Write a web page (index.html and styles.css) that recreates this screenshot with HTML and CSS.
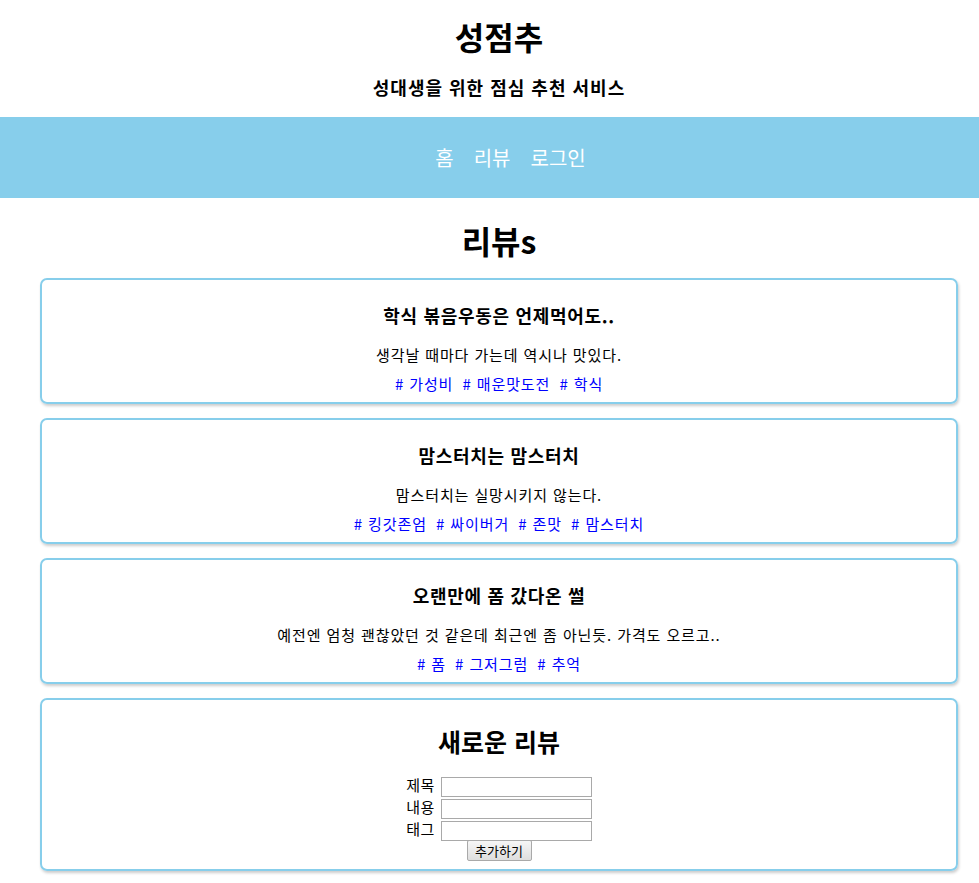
FILE: index.html
```html
<!DOCTYPE html>
<html lang="ko">
<head>
    <meta charset="UTF-8">
    <meta name="viewport" content="width=device-width, initial-scale=1.0">
    <title>성점추</title>
    <link rel="stylesheet" href="styles.css">
</head>
<body>
    <header>
        <h1>성점추</h1>
        <h3>성대생을 위한 점심 추천 서비스</h3>
    </header>
    <nav>
        <ul>
            <li><a href="index.html">홈</a></li>
            <li><a href="review.html">리뷰</a></li>
            <li><a href="login.html">로그인</a></li>
        </ul>
    </nav>
    <main>
        <h1 class="page-title">리뷰s</h1>

        <div class="review">
            <h3>학식 볶음우동은 언제먹어도..</h3>
            <p>생각날 때마다 가는데 역시나 맛있다.</p>
            <div class="tags">
                <span># 가성비</span>
                <span># 매운맛도전</span>
                <span># 학식</span>
            </div>
        </div>

        <div class="review">
            <h3>맘스터치는 맘스터치</h3>
            <p>맘스터치는 실망시키지 않는다.</p>
            <div class="tags">
                <span># 킹갓존엄</span>
                <span># 싸이버거</span>
                <span># 존맛</span>
                <span># 맘스터치</span>
            </div>
        </div>

        <div class="review">
            <h3>오랜만에 폼 갔다온 썰</h3>
            <p>예전엔 엄청 괜찮았던 것 같은데 최근엔 좀 아닌듯. 가격도 오르고..</p>
            <div class="tags">
                <span># 폼</span>
                <span># 그저그럼</span>
                <span># 추억</span>
            </div>
        </div>

        <div class="review new-review">
            <h2>새로운 리뷰</h2>
            <form>
                <div class="form-row">
                    <label for="title">제목</label>
                    <input type="text" id="title">
                </div>
                <div class="form-row">
                    <label for="content">내용</label>
                    <input type="text" id="content">
                </div>
                <div class="form-row">
                    <label for="tag">태그</label>
                    <input type="text" id="tag">
                </div>
                <div class="form-row">
                    <button type="button">추가하기</button>
                </div>
            </form>
        </div>
    </main>
</body>
</html>
```

FILE: styles.css
```css
/* Base */
body {
    font-family: "Noto Sans CJK KR", "Noto Sans", sans-serif;
    margin: 0;
    padding: 0;
    color: #000;
    background-color: #fff;
}

header {
    text-align: center;
    padding: 16px 0 18px 19px;
}

header h1 {
    font-size: 32px;
    line-height: 40px;
    margin: 0;
}

header h3 {
    font-size: 18px;
    letter-spacing: 1px;
    line-height: 24px;
    margin: 19px 0 0;
}

/* Navigation */
nav {
    background-color: #87ceeb;
    height: 81px;
    padding-left: 42px;
    display: flex;
    align-items: center;
    justify-content: center;
}

nav ul {
    list-style-type: none;
    margin: 0;
    padding: 0;
    display: flex;
    gap: 20px;
}

nav ul li a {
    color: #fff;
    text-decoration: none;
    font-size: 20px;
}

/* Reviews */
main {
    padding: 0 21px 20px 40px;
}

.page-title {
    text-align: center;
    font-size: 32px;
    line-height: 40px;
    margin: 22px 0 18px;
}

.review {
    border: 2px solid #87ceeb;
    border-radius: 7px;
    box-shadow: 1px 2px 3px rgba(0, 0, 0, 0.2);
    text-align: center;
    padding: 23px 10px 8px;
    margin-bottom: 14px;
    height: 126px;
    box-sizing: border-box;
}

.review h3 {
    font-size: 18px;
    letter-spacing: 0.7px;
    line-height: 24px;
    margin: 0 0 18px;
}

.review p {
    font-size: 15px;
    letter-spacing: 0.9px;
    line-height: 20px;
    margin: 0 0 9px;
}

.tags {
    font-size: 15px;
    letter-spacing: 0.9px;
    line-height: 20px;
    color: #0000ff;
}

.tags span {
    margin: 0 2px;
}

.new-review {
    height: 173px;
    padding-top: 25px;
}

.new-review h2 {
    font-size: 25px;
    line-height: 32px;
    margin: 0 0 16px;
}

.form-row {
    height: 22px;
    display: flex;
    justify-content: center;
    align-items: center;
    gap: 6px;
    font-size: 15px;
    letter-spacing: 0.5px;
}

.form-row input {
    width: 151px;
    height: 20px;
    box-sizing: border-box;
    margin: 5px 0 0;
    padding: 1px 2px;
    border: 1px solid #a9a9a9;
    font-size: 13px;
}

.form-row button {
    font-family: inherit;
    font-size: 13px;
    letter-spacing: 0;
    width: 65px;
    height: 21px;
    padding: 0;
    margin-top: 1px;
    border: 1px solid #a9a9a9;
    border-radius: 2px;
    background: linear-gradient(#f6f6f6, #dedede);
}
```
